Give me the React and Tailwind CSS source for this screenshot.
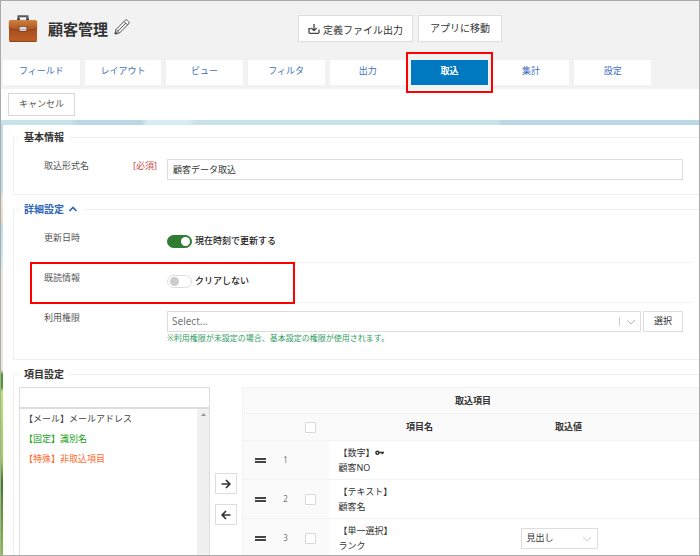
import React, { useState } from 'react';
import clsx from 'clsx';

const tabs = ['フィールド', 'レイアウト', 'ビュー', 'フィルタ', '出力', '取込', '集計', '設定'];

const sourceItems = [
  { label: '【メール】メールアドレス', className: 'text-[#444444]' },
  { label: '【固定】識別名', className: 'text-[#22a122]' },
  { label: '【特殊】非取込項目', className: 'text-[#ff6a2b]' }
];

const importRows = [
  { type: '【数字】', name: '顧客NO', isKey: true },
  { type: '【テキスト】', name: '顧客名' },
  { type: '【単一選択】', name: 'ランク', options: ['見出し', '値'] }
];

const BriefcaseIcon = () => (
  <svg width="30" height="28" viewBox="0 0 30 28" aria-hidden="true">
    <defs>
      <linearGradient id="caseTop" x1="0" y1="0" x2="0" y2="1">
        <stop offset="0" stopColor="#cf8040" />
        <stop offset="1" stopColor="#a9531f" />
      </linearGradient>
      <linearGradient id="caseBody" x1="0" y1="0" x2="0" y2="1">
        <stop offset="0" stopColor="#a64d1d" />
        <stop offset="1" stopColor="#bd6027" />
      </linearGradient>
    </defs>
    <path d="M10.5 5V1.2h9V5" fill="none" stroke="#555b60" strokeWidth="2" />
    <rect x="9" y="3.5" width="3" height="2" fill="#3f4448" />
    <rect x="18" y="3.5" width="3" height="2" fill="#3f4448" />
    <path d="M1 13h28v12.2a1.8 1.8 0 0 1-1.8 1.8H2.8A1.8 1.8 0 0 1 1 25.2z" fill="url(#caseBody)" />
    <path d="M2.6 5h24.8a1.8 1.8 0 0 1 1.8 1.8V13c-3 2-8 2.4-14.2 2.4S3.8 15 .8 13V6.8A1.8 1.8 0 0 1 2.6 5z" fill="url(#caseTop)" />
    <path d="M.8 13c3 2 8 2.4 14.2 2.4S26.2 15 29.2 13" fill="none" stroke="#8a3d16" strokeWidth="0.8" />
    <path d="M1.5 26.4h27" stroke="#86390f" strokeWidth="0.8" />
    <rect x="10.5" y="11" width="9" height="6" rx="1.5" fill="#85401c" />
    <rect x="11.5" y="11.8" width="7" height="4.2" rx="1" fill="#d9d9d9" />
    <path d="M12 14.6h6" stroke="#a8a8a8" strokeWidth="0.8" />
  </svg>
);

const PencilIcon = () => (
  <svg width="16" height="16" viewBox="0 0 16 16" fill="none" stroke="#555555" strokeWidth="1" strokeLinejoin="round">
    <path d="M1 15l1-4.5L11.2 1.3a1.5 1.5 0 0 1 2.1 0l1.4 1.4a1.5 1.5 0 0 1 0 2.1L5.500 14z" fill="#f8f8f8" />
    <path d="M2 10.500L5.500 14M10 2.500L13.500 6M3.800 12.200L12 4" />
    <path d="M1 15l.6-2.600 2 2z" fill="#555555" />
  </svg>
);

const DownloadIcon = () => (
  <svg width="12" height="12" viewBox="0 0 12 12" fill="none" stroke="#444444" strokeWidth="1.3">
    <path d="M6 1v6.500M3.300 5L6 7.700 8.700 5" />
    <path d="M2.800 5.700H1v3.800q0 .8.8.8h8.400q.8 0 .8-.8V6.500" />
  </svg>
);

const ArrowIcon = ({ left }) => (
  <svg width="10" height="10" viewBox="0 0 10 10" fill="none" stroke="#333333" strokeWidth="1.7">
    {left ? <path d="M9.500 5H1.500M5 1L1.200 5 5 9" /> : <path d="M.5 5h8M5 1l3.800 4L5 9" />}
  </svg>
);

const ChevronIcon = ({ className, up }) => (
  <svg className={className} width="10" height="6" viewBox="0 0 10 6" fill="none" stroke="currentColor">
    <path d={up ? 'M1.500 5L5 1.500 8.500 5' : 'M1 1l4 4 4-4'} />
  </svg>
);

const KeyIcon = () => (
  <svg width="9" height="6" viewBox="0 0 9 6" fill="none" stroke="#333333" strokeWidth="1.5" aria-hidden="true">
    <circle cx="2.400" cy="2.800" r="1.500" />
    <path d="M4 2.600h5M7.300 2.600v1.600" />
  </svg>
);

const HandleIcon = () => (
  <svg className="mx-auto" width="11" height="5" viewBox="0 0 11 5" fill="#444444" aria-hidden="true">
    <rect width="11" height="2" />
    <rect y="3" width="11" height="2" />
  </svg>
);

const Section = ({ title, link, children }) => (
  <fieldset className="mb-1 ml-[10px] border border-r-0 border-[#efefef] pl-1">
    <legend className="px-[6px] text-[10px] leading-5 font-bold">
      {link ? (
        <button type="button" className="flex items-center gap-1 text-[#2f66b5]">
          {title}
          <ChevronIcon className="stroke-[1.7]" up />
        </button>
      ) : (
        title
      )}
    </legend>
    {children}
  </fieldset>
);

const FormRow = ({ id, label, required, last, children }) => (
  <div className={clsx('ml-3 mr-[6px] flex pt-2 pr-[10px] pl-[14px]', !last && 'border-b border-[#f2f2f2]')}>
    <div className="flex h-[14px] w-[123px] shrink-0 justify-between pr-[10px] leading-[14px]">
      <label htmlFor={id} className="text-[#555555]">{label}</label>
      {required && <span className="text-[#c9504c]">[必須]</span>}
    </div>
    <div className="min-w-0 grow">{children}</div>
  </div>
);

const Toggle = ({ id, label, checked, onChange }) => (
  <div className="flex h-[31px] items-start gap-[3px] pt-1">
    <input
      id={id}
      type="checkbox"
      role="switch"
      checked={checked}
      onChange={onChange}
      className="h-[13px] w-[25px] appearance-none rounded-full border border-[#dddddd] bg-white before:block before:size-[9px] before:translate-x-[2px] before:translate-y-px before:rounded-full before:bg-[#cccccc] checked:border-[#2e7d32] checked:bg-[#2e7d32] checked:before:translate-x-[13px] checked:before:bg-white"
    />
    <label htmlFor={id} className="leading-[11px] font-medium text-[#222222]">{label}</label>
  </div>
);

const RowCheckbox = ({ label }) => (
  <input
    type="checkbox"
    aria-label={label}
    className="mx-auto block size-[11px] appearance-none rounded-[1px] border border-[#d8d8d8] bg-white checked:bg-[#0079c1]"
  />
);

const ImportTable = () => (
  <table className="w-full table-fixed border-collapse border-l border-[#f2f2f2]">
    <colgroup>
      <col className="w-[36px]" />
      <col className="w-[14px]" />
      <col className="w-[36px]" />
      <col className="w-[182px]" />
      <col className="w-[116px]" />
      <col />
    </colgroup>
    <thead className="bg-[#fafafa]">
      <tr className="h-[26px] border-y border-[#f2f2f2]">
        <th colSpan={6} className="pl-1 font-bold">取込項目</th>
      </tr>
      <tr className="h-[27px] border-b border-[#f2f2f2]">
        <th />
        <th />
        <th><RowCheckbox label="すべて選択" /></th>
        <th className="font-bold">項目名</th>
        <th className="font-bold">取込値</th>
        <th />
      </tr>
    </thead>
    <tbody>
      {importRows.map((row, i) => (
        <tr key={row.name} className="h-[39px] border-b border-[#f2f2f2]">
          <td className="bg-[#fafafa]"><HandleIcon /></td>
          <td className="bg-[#fafafa] text-center text-[8px] text-[#777777]">{i + 1}</td>
          <td className="bg-[#fafafa]">{!row.isKey && <RowCheckbox label={row.name} />}</td>
          <td className="pl-[10px] leading-[15px]">
            <div className="flex items-center">{row.type}{row.isKey && <KeyIcon />}</div>
            <div>{row.name}</div>
          </td>
          <td className="pl-[10px]">
            {row.options && (
              <div className="relative w-[77px]">
                <select aria-label="取込値" className="block h-[21px] w-full appearance-none border border-[#dddddd] bg-white pl-[5px]">
                  {row.options.map((option) => <option key={option}>{option}</option>)}
                </select>
                <ChevronIcon className="pointer-events-none absolute top-2 right-[6px] text-[#cccccc]" />
              </div>
            )}
          </td>
          <td />
        </tr>
      ))}
    </tbody>
  </table>
);

const App = () => {
  const [activeTab, setActiveTab] = useState('取込');
  const [formatName, setFormatName] = useState('顧客データ取込');
  const [updateTime, setUpdateTime] = useState(true);
  const [clearRead, setClearRead] = useState(false);

  return (
    <div className="flex h-screen flex-col overflow-hidden border border-[#ababab] bg-white font-['Noto_Sans','Noto_Sans_CJK_JP',sans-serif] text-[9px] text-[#333333]">
      <header className="shrink-0 bg-[#f2f2f2] pb-1">
        <div className="flex h-[59px] items-start pt-[14px] pl-[7px]">
          <div className="flex w-[290px] items-center">
            <BriefcaseIcon />
            <h1 className="ml-[10px] text-[15px] leading-7 font-bold">顧客管理</h1>
            <button type="button" aria-label="名前を編集" className="ml-[6px] pb-1"><PencilIcon /></button>
          </div>
          <div className="flex gap-[5px] text-[10px]">
            <button type="button" className="flex h-[27px] w-[115px] items-center justify-center gap-[3px] border border-[#dddddd] bg-white">
              <DownloadIcon />
              <span className="pt-1">定義ファイル出力</span>
            </button>
            <button type="button" className="h-[27px] w-[84px] border border-[#dddddd] bg-white">アプリに移動</button>
          </div>
        </div>
        <nav className="mr-[48px] ml-[2px] grid grid-cols-8 gap-[5px]">
          {tabs.map((tab) => (
            <div key={tab} className="relative">
              <button
                type="button"
                onClick={() => setActiveTab(tab)}
                className={clsx(
                  'block h-[25px] w-full pb-[3px]',
                  tab === activeTab ? 'bg-[#0079c1] font-bold text-white' : 'bg-white text-[#3f6fc0]'
                )}
              >
                {tab}
              </button>
              {tab === '取込' && (
                <div className="pointer-events-none absolute -inset-x-[5px] -inset-y-2 border-2 border-[#ff0000]" />
              )}
            </div>
          ))}
        </nav>
      </header>

      <div className="shrink-0 py-1 pl-[7px]">
        <button type="button" className="block h-[23px] w-[67px] border border-[#d8d8d8] bg-white pb-[2px] text-[#555555]">キャンセル</button>
      </div>

      <div className="h-[5px] shrink-0 bg-[linear-gradient(to_right,#c9e1ea_10%,#b9d8e4_11%,#b9d8e4_20%,#d6ebf3_21%,#d6ebf3_27%,#c9e1ea_28%,#c9e1ea_71%,#b9d8e4_72%)]" />

      <div className="flex min-h-0 grow">
        <div className="w-[2px] shrink-0 bg-[linear-gradient(to_bottom,#c2dde7_15%,#eee4d5_17%,#eadbc4_22%,#bfdde6_24%,#d5e8ee_33%,#ebe5dc_34%,#ebe5dc_57%,#4f9a2d_58%,#4f9a2d_61%,#b9e86a_62%,#9ccc50_78%,#3f7d22_83%,#8cbf45_100%)]" />
        <main className="min-w-0 grow pt-[2px]">
          <Section title="基本情報">
            <div className="h-[47px] pt-1">
              <FormRow id="format-name" label="取込形式名" required last>
                <input
                  id="format-name"
                  value={formatName}
                  onChange={(e) => setFormatName(e.target.value)}
                  className="block h-[21px] w-full border border-[#dddddd] px-[5px] pb-px outline-none"
                />
              </FormRow>
            </div>
          </Section>

          <Section title="詳細設定" link>
            <div className="pt-1">
              <FormRow id="update-time" label="更新日時">
                <Toggle id="update-time" label="現在時刻で更新する" checked={updateTime} onChange={() => setUpdateTime(!updateTime)} />
              </FormRow>
              <div className="relative">
                <FormRow id="clear-read" label="既読情報">
                  <Toggle id="clear-read" label="クリアしない" checked={clearRead} onChange={() => setClearRead(!clearRead)} />
                </FormRow>
                <div className="pointer-events-none absolute -inset-y-px left-3 w-[265px] border-2 border-[#ff0000]" />
              </div>
              <FormRow id="permission" label="利用権限" last>
                <div className="flex gap-[2px]">
                  <div className="relative grow">
                    <select id="permission" className="block h-[21px] w-full appearance-none border border-[#dddddd] bg-white pb-px pl-1 text-[10px] text-[#777777]">
                      <option>Select...</option>
                    </select>
                    <div className="pointer-events-none absolute inset-y-[6px] right-[5px] flex items-center border-l border-[#cccccc] pl-[6px] text-[#bbbbbb]">
                      <ChevronIcon />
                    </div>
                  </div>
                  <button type="button" className="h-[21px] w-10 border border-[#dddddd] bg-white pb-px">選択</button>
                </div>
                <p className="h-[27px] text-[8px] leading-3 text-[#2e9e62]">※利用権限が未設定の場合、基本設定の権限が使用されます。</p>
              </FormRow>
            </div>
          </Section>

          <Section title="項目設定">
            <div className="flex pt-[3px] pl-px">
              <div className="w-[191px] shrink-0">
                <input aria-label="項目検索" className="block h-[21px] w-full border border-[#dddddd] px-[5px] outline-none" />
                <div className="flex h-[180px] border border-[#dddddd]">
                  <ul className="grow pl-1">
                    {sourceItems.map((item) => (
                      <li key={item.label} className={clsx('leading-5', item.className)}>{item.label}</li>
                    ))}
                  </ul>
                  <div className="w-3 bg-[#f0f0f0] pt-1">
                    <svg className="mx-auto" width="5" height="3" viewBox="0 0 5 3" fill="#999999" aria-hidden="true">
                      <path d="M2.500 0L5 3H0z" />
                    </svg>
                  </div>
                </div>
              </div>
              <div className="flex w-8 shrink-0 flex-col items-center gap-[10px] pt-[86px]">
                <button type="button" aria-label="追加" className="flex h-[21px] w-[22px] items-center justify-center border border-[#dddddd] bg-white"><ArrowIcon /></button>
                <button type="button" aria-label="削除" className="flex h-[21px] w-[22px] items-center justify-center border border-[#dddddd] bg-white"><ArrowIcon left /></button>
              </div>
              <div className="min-w-0 grow"><ImportTable /></div>
            </div>
          </Section>
        </main>
      </div>
    </div>
  );
};

export default App;
